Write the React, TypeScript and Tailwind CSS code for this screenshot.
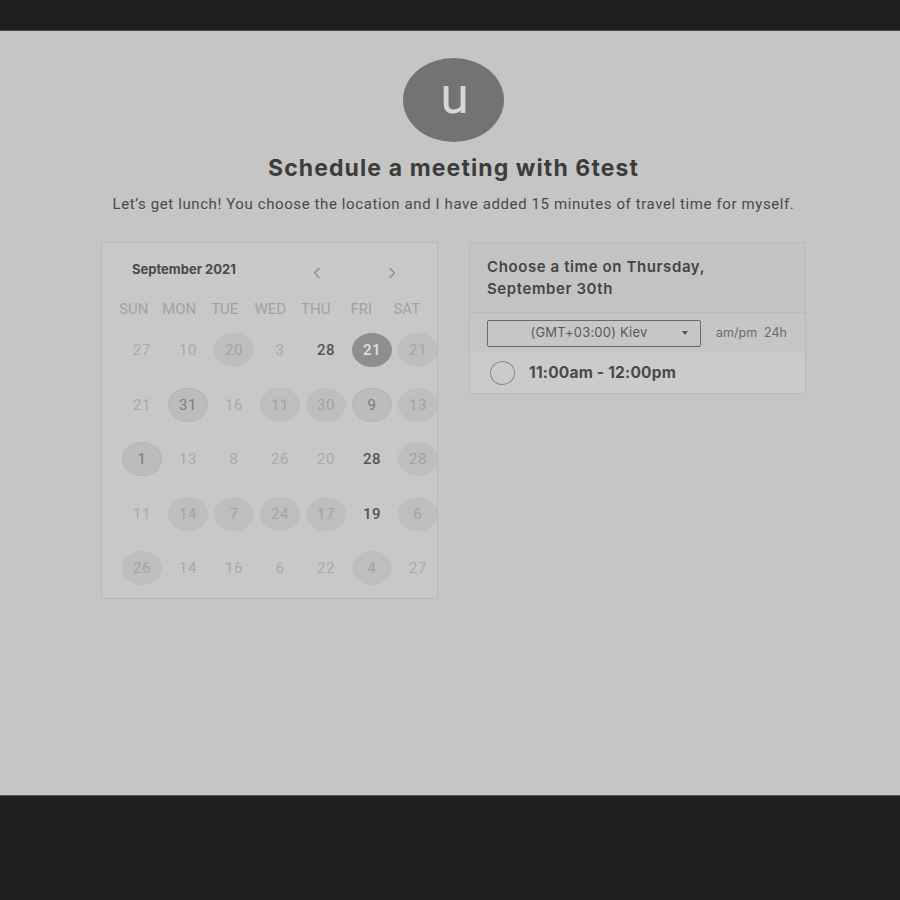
import React from "react";

type Day = { n: number; kind?: "plain" | "bold" | "soft" | "ring" | "sel" };

const weeks: Day[][] = [
  [{ n: 27 }, { n: 10 }, { n: 20, kind: "soft" }, { n: 3 }, { n: 28, kind: "bold" }, { n: 21, kind: "sel" }, { n: 21, kind: "soft" }],
  [{ n: 21 }, { n: 31, kind: "ring" }, { n: 16 }, { n: 11, kind: "soft" }, { n: 30, kind: "soft" }, { n: 9, kind: "ring" }, { n: 13, kind: "soft" }],
  [{ n: 1, kind: "ring" }, { n: 13 }, { n: 8 }, { n: 26 }, { n: 20 }, { n: 28, kind: "bold" }, { n: 28, kind: "soft" }],
  [{ n: 11 }, { n: 14, kind: "soft" }, { n: 7, kind: "soft" }, { n: 24, kind: "soft" }, { n: 17, kind: "soft" }, { n: 19, kind: "bold" }, { n: 6, kind: "soft" }],
  [{ n: 26, kind: "soft" }, { n: 14 }, { n: 16 }, { n: 6 }, { n: 22 }, { n: 4, kind: "soft" }, { n: 27 }],
];

const dayNames = ["SUN", "MON", "TUE", "WED", "THU", "FRI", "SAT"];

function DayCell({ d }: { d: Day }) {
  const kind = d.kind ?? "plain";
  let cls = "text-[#a9a9a9]";
  if (kind === "bold") cls = "text-[#555555] font-medium";
  if (kind === "soft") cls = "bg-[#bebebe] text-[#a3a3a3]";
  if (kind === "ring") cls = "bg-[#bcbcbc] text-[#7c7c7c] border border-[#b4b4b4]";
  if (kind === "sel") cls = "bg-[#8e8e8e] text-[#e0e0e0] font-medium";
  return (
    <div className="flex items-center justify-center h-[54.5px]">
      <div className={`w-[40px] h-[34px] shrink-0 rounded-[50%] flex items-center justify-center text-[15px] tracking-[0.5px] ${cls}`}>
        {d.n}
      </div>
    </div>
  );
}

function Chevron({ dir }: { dir: "left" | "right" }) {
  return (
    <svg width="12" height="12" viewBox="0 0 12 12" fill="none" stroke="#8c8c8c" strokeWidth="1.4" strokeLinecap="round" strokeLinejoin="round">
      {dir === "left" ? <path d="M8 1.5 3.5 6 8 10.5" /> : <path d="M4 1.5 8.5 6 4 10.5" />}
    </svg>
  );
}

export default function App() {
  return (
    <div className="w-[900px] h-[900px] bg-[#1e1e1e] flex flex-col" style={{ fontFamily: "Roboto, 'Liberation Sans', sans-serif" }}>
      <div className="h-[31px] shrink-0 bg-[#1e1e1e] border-b border-[#4a4a4a]" />
      <main className="h-[765px] bg-[#c5c5c5] flex flex-col border-b border-[#575757]">
        <header className="flex flex-col items-center pl-[7px]">
          <div className="mt-[27px] w-[101px] h-[84px] rounded-[50%] bg-[#737373] flex items-center justify-center text-[#d6d6d6] text-[52px] leading-none pb-[8px] pl-[2px]">
            u
          </div>
          <h1 className="mt-[12px] text-[23px] leading-[28px] font-bold tracking-[1.1px] text-[#3c3c3c]" style={{ fontFamily: "Inter, sans-serif" }}>
            Schedule a meeting with 6test
          </h1>
          <p className="mt-[12px] text-[15px] leading-[20px] tracking-[0.6px] text-[#4a4a4a]">
            Let’s get lunch! You choose the location and I have added 15 minutes of travel time for myself.
          </p>
        </header>

        <div className="mt-[28px] flex items-start gap-[31px] pl-[101px]">
          <section className="w-[337px] h-[357px] overflow-hidden bg-[#c8c8c8] border border-[#b8b8b8] rounded-[2px] px-[9px]">
            <div className="flex items-center h-[32px] mt-[11px]">
              <span className="ml-[21px] text-[13px] font-bold text-[#4a4a4a]" style={{ fontFamily: "Inter, sans-serif" }}>
                September 2021
              </span>
              <span className="ml-[75px] mt-[6px] flex">
                <Chevron dir="left" />
              </span>
              <span className="ml-[63px] mt-[6px] flex">
                <Chevron dir="right" />
              </span>
            </div>
            <div className="grid grid-cols-7 w-[318.5px] mt-[11px]">
              {dayNames.map((n) => (
                <div key={n} className="text-center text-[15px] text-[#a2a2a2] h-[24px] leading-[24px]">
                  {n}
                </div>
              ))}
            </div>
            <div className="grid grid-cols-[repeat(7,46px)] ml-[8px] mt-[2px] w-[322px]">
              {weeks.flat().map((d, i) => (
                <DayCell key={i} d={d} />
              ))}
            </div>
          </section>

          <section className="w-[337px] bg-[#c7c7c7] border border-[#b9b9b9] rounded-[2px]" style={{ fontFamily: "Inter, sans-serif" }}>
            <div className="h-[70px] bg-[#c3c3c3] border-b border-[#bbbbbb] px-[17px] pt-[13px] text-[15px] font-semibold tracking-[0.6px] leading-[22px] text-[#454545]">
              Choose a time on Thursday,
              <br />
              September 30th
            </div>
            <div className="h-[40px] flex items-center px-[17px] bg-[#c6c6c6]">
              <div className="w-[214px] h-[27px] border border-[#6a6a6a] rounded-[2px] flex items-center text-[13px] text-[#5a5a5a]">
                <span className="flex-1 text-center pl-[8px] tracking-[0.2px]">(GMT+03:00) Kiev</span>
                <span className="w-0 h-0 border-l-[3px] border-r-[3px] border-t-[4px] border-l-transparent border-r-transparent border-t-[#555555] mr-[12px]" />
              </div>
              <span className="ml-[15px] text-[12.5px] text-[#6a6a6a]">am/pm</span>
              <span className="ml-[7px] text-[12.5px] text-[#6a6a6a]">24h</span>
            </div>
            <div className="h-[40px] flex items-center px-[20px] bg-[#cbcbcb]">
              <span className="w-[25px] h-[24px] rounded-[50%] border-[1.5px] border-[#8a8a8a]" />
              <span className="ml-[14px] text-[15.5px] font-bold tracking-[0.2px] text-[#4a4a4a]">11:00am - 12:00pm</span>
            </div>
          </section>
        </div>
      </main>
    </div>
  );
}
